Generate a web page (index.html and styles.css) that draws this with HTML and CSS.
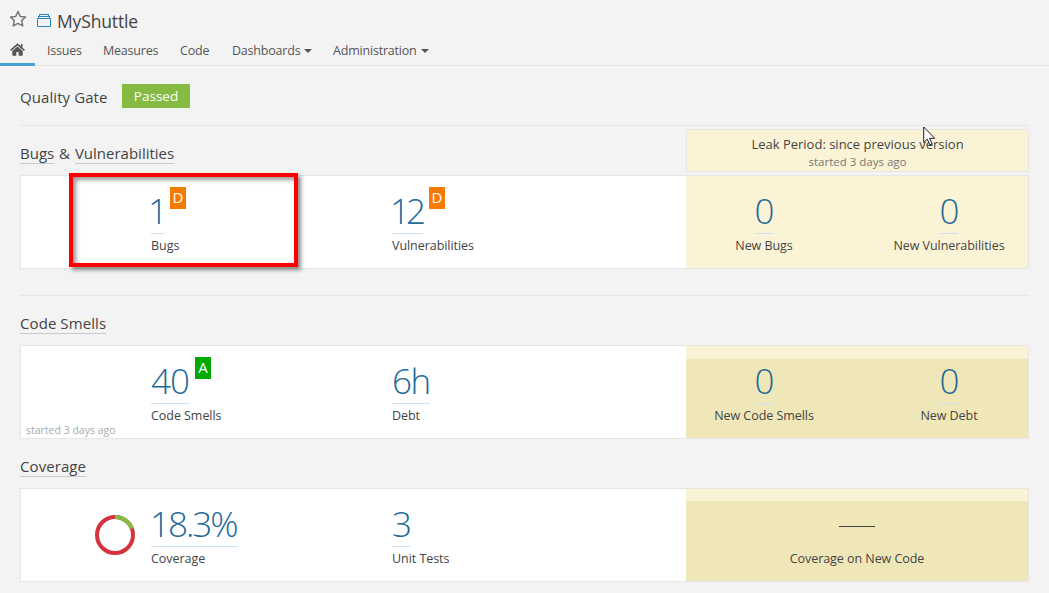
FILE: index.html
```
<!DOCTYPE html>
<html lang="en">
<head>
<meta charset="utf-8">
<title>MyShuttle</title>
<link rel="stylesheet" href="styles.css">
</head>
<body>
<header class="header">
  <div class="project">
    <svg class="star" width="18" height="18" viewBox="0 0 18 18"><path d="M9 1.500l2.300 5 5.200.5-3.800 3.600 1 5.300L9 13.400l-4.700 2.500 1-5.300L1.500 7l5.200-.5z" fill="none" stroke="#777" stroke-width="1.500" stroke-linejoin="round"/></svg>
    <svg class="box" width="14" height="13" viewBox="0 0 14 13"><path d="M.5 4.500h13v8H.5zM1 2.500h12M2 .5h10M1.500 2v2.500M12.500 2v2.500M2.500 0v2M11.500 0v2" fill="none" stroke="#2a87c4"/></svg>
    <h1 class="name">MyShuttle</h1>
  </div>
  <nav class="tabs">
    <a class="tab home"><svg width="15" height="13" viewBox="0 0 15 13"><path d="M7.500 3.600L2.300 8v4.300c0 .3.200.5.500.5h3.500V9h2.400v3.800h3.500c.3 0 .5-.2.500-.5V8z" fill="#555"/><path d="M.6 7.300l6.900-5.900 6.900 5.900M11.700 1v3.500" fill="none" stroke="#555" stroke-width="1.600"/></svg></a>
    <a class="tab issues">Issues</a>
    <a class="tab measures">Measures</a>
    <a class="tab code">Code</a>
    <a class="tab dash">Dashboards<i class="caret"></i></a>
    <a class="tab admin">Administration<i class="caret"></i></a>
  </nav>
</header>
<main class="main">
  <section class="gate"><h2 class="title">Quality Gate</h2><span class="passed">Passed</span></section>
  <section class="domain bugs">
    <div class="domain-head">
      <h2 class="title"><a class="link">Bugs</a> &amp; <a class="link">Vulnerabilities</a></h2>
      <div class="legend"><div class="legend-main">Leak Period: since previous version</div><div class="legend-sub">started 3 days ago</div></div>
    </div>
    <div class="card">
      <div class="measure first"><div class="row"><a class="value one">1</a><b class="rating">D</b></div><span class="label">Bugs</span></div>
      <div class="measure"><div class="row"><a class="value twelve">12</a><b class="rating">D</b></div><span class="label">Vulnerabilities</span></div>
      <div class="leak">
        <div class="new"><a class="value">0</a><span class="label">New Bugs</span></div>
        <div class="new"><a class="value">0</a><span class="label">New Vulnerabilities</span></div>
      </div>
      <div class="highlight"></div>
    </div>
  </section>
  <section class="domain smells">
    <h2 class="title"><a class="link">Code Smells</a></h2>
    <div class="card">
      <div class="measure first"><div class="row"><a class="value">40</a><b class="rating a">A</b></div><span class="label">Code Smells</span></div>
      <div class="measure"><div class="row"><a class="value hours">6h</a></div><span class="label">Debt</span></div>
      <div class="leak shaded">
        <div class="new"><a class="value">0</a><span class="label">New Code Smells</span></div>
        <div class="new"><a class="value">0</a><span class="label">New Debt</span></div>
      </div>
      <span class="since">started 3 days ago</span>
    </div>
  </section>
  <section class="domain coverage">
    <h2 class="title"><a class="link">Coverage</a></h2>
    <div class="card">
      <div class="chart"><svg width="40" height="40" viewBox="0 0 40 40"><circle cx="20" cy="20" r="18" fill="none" stroke="#d4333f" stroke-width="4"/><path d="M20 2A18 18 0 0 1 36.800 13.500" fill="none" stroke="#85bb43" stroke-width="4"/></svg></div>
      <div class="measure first"><div class="row"><a class="value percent">18.3%</a></div><span class="label">Coverage</span></div>
      <div class="measure"><div class="row"><a class="value">3</a></div><span class="label">Unit Tests</span></div>
      <div class="leak shaded single">
        <div class="new"><span class="dash-value"></span><span class="label">Coverage on New Code</span></div>
      </div>
    </div>
  </section>
</main>
<svg class="cursor" width="13" height="20" viewBox="0 0 13 20"><path d="M.7 1v15.500l3.600-3.400 2.500 5.700 2.300-1-2.500-5.500h5.100z" fill="#fff" stroke="#1a1a2a" stroke-width="1"/></svg>
</body>
</html>
```
FILE: styles.css
```
* { box-sizing: border-box; }
body { margin: 0; height: 593px; overflow: hidden; background: #f3f3f3; color: #444; font: 12.5px/18px "Open Sans", "Noto Sans", sans-serif; }
h1, h2 { margin: 0; font-weight: 400; }
.header { height: 66px; border-bottom: 1px solid #e6e6e6; }
.project { display: flex; height: 36px; padding-left: 9px; }
.star { margin-top: 10px; }
.box { margin: 14px 0 0 10px; }
.name { margin: 9px 0 0 6px; font-size: 17.5px; line-height: 24px; letter-spacing: -.15px; }
.tabs { display: flex; height: 30px; }
.tab { padding-top: 6px; white-space: nowrap; color: #555; letter-spacing: -.2px; }
.home { width: 35px; padding: 7px 0 0 10px; border-bottom: 3px solid #4b9fd5; line-height: 0; }
.issues { width: 68px; padding-left: 12px; }
.measures { width: 77px; }
.code { width: 52px; }
.dash { width: 101px; }
.caret { display: inline-block; margin-left: 4px; border: 4px solid transparent; border-top-color: #555; border-bottom: 0; vertical-align: 2px; }
.main { padding: 0 20px; }
.title { font-size: 15px; line-height: 20px; letter-spacing: .08px; white-space: nowrap; }
.gate { display: flex; height: 60px; padding-top: 18px; border-bottom: 1px solid #e6e6e6; }
.gate .title { width: 102px; padding-top: 3px; }
.passed { width: 68px; height: 24px; background: #85bb43; color: #fff; text-align: center; font-size: 13.5px; line-height: 24px; }
.link { display: inline-block; border-bottom: 1px solid #cacaca; }
.domain-head { display: flex; justify-content: space-between; height: 49px; padding-top: 2px; }
.domain-head .title { padding-top: 15px; word-spacing: 1px; letter-spacing: 0; }
.legend { width: 343px; height: 43px; margin-top: 1px; padding-top: 5px; background: #fbf3d5; border: 1px solid #e6e6e6; text-align: center; }
.legend-main { font-size: 13px; line-height: 19px; }
.legend-sub { font-size: 11.5px; line-height: 15px; color: #777; }
.card { position: relative; display: flex; height: 94px; padding-left: 130px; background: #fff; border: 1px solid #e6e6e6; }
.bugs { height: 170px; border-bottom: 1px solid #e6e6e6; }
.smells { padding-top: 17px; height: 160px; }
.smells .title, .coverage .title { height: 21px; }
.smells .card, .coverage .card { margin-top: 11px; }
.measure { width: 294px; padding-top: 14px; }
.measure.first { width: 241px; }
.row { display: flex; align-items: flex-start; }
.value { display: block; height: 44px; border-bottom: 1px solid #cae3f2; color: #236a97; font-size: 35px; font-weight: 300; line-height: 42px; letter-spacing: -1px; white-space: nowrap; }
.one { width: 13px; text-indent: -3px; }
.twelve { width: 31px; text-indent: -2px; letter-spacing: -4px; }
.hours { width: 38px; letter-spacing: -1.5px; }
.percent { width: 87px; text-indent: -1px; letter-spacing: -2px; }
.rating { width: 16px; height: 22px; margin: -3px 0 0 6px; background: #f77a00; color: #fff; text-align: center; font-weight: 400; font-size: 15px; line-height: 21px; }
.rating.a { background: #0a0; }
.label { display: block; padding-top: 3px; letter-spacing: -.05px; white-space: nowrap; }
.leak { display: grid; grid-template-columns: 156px 186px; width: 342px; background: #fbf3d5; }
.shaded { background: linear-gradient(#fbf3d5 13px, #f0e7b8 13px); }
.new { display: flex; flex-direction: column; align-items: center; padding-top: 14px; }
.new + .new { padding-left: 28px; }
.single { grid-template-columns: 342px; background: linear-gradient(#fbf3d5 12px, #f0e7b8 12px); }
.dash-value { width: 36px; height: 24px; margin-bottom: 20px; border-bottom: 1px solid #444; }
.since { position: absolute; left: 5px; bottom: 0; color: #aaa; font-size: 10.5px; line-height: 16px; }
.chart { width: 56px; margin-left: -56px; padding-top: 26px; }
.highlight { position: absolute; left: 48px; top: -3px; width: 229px; height: 94px; border: 4px solid #f00; box-shadow: 3px 3px 4px rgba(0,0,0,.45), inset 3px 3px 4px rgba(0,0,0,.4); }
.cursor { position: absolute; left: 923px; top: 126px; }
```
